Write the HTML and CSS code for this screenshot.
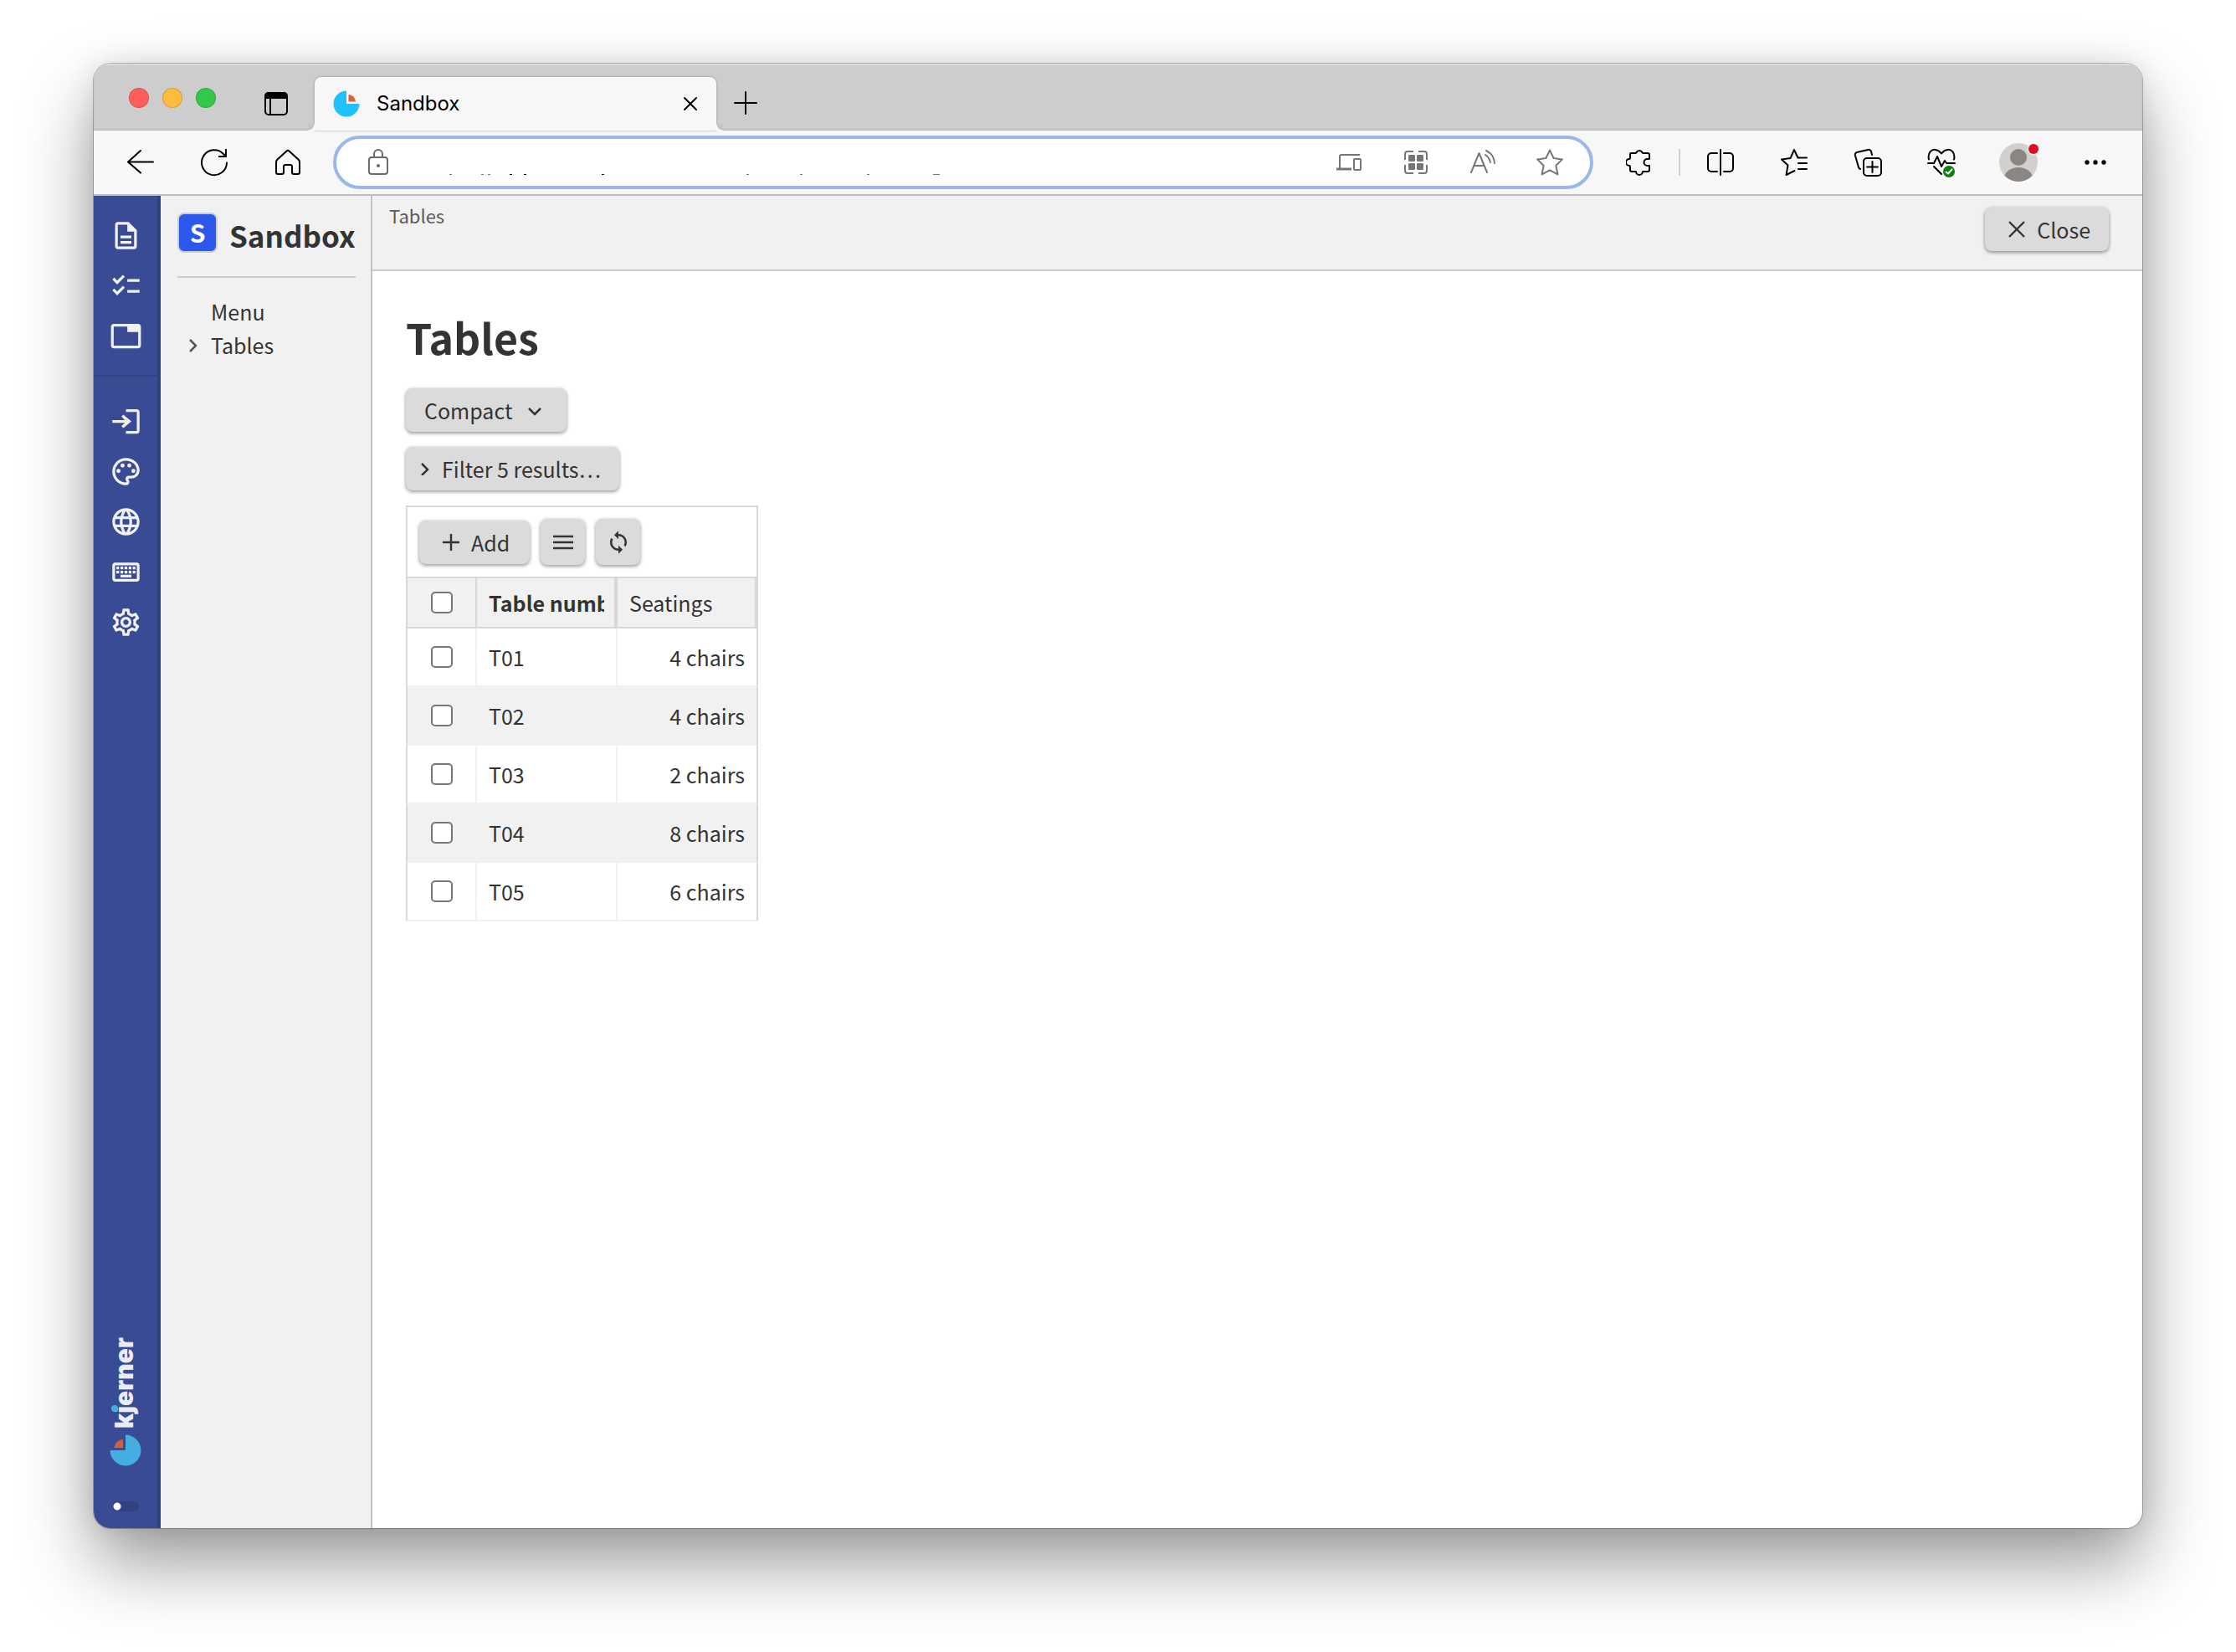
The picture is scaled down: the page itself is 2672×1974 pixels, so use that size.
FILE: index.html
```html
<!DOCTYPE html>
<html lang="en">
<head>
<meta charset="utf-8">
<title>Sandbox</title>
<link rel="stylesheet" href="styles.css">
</head>
<body>
<div class="window">
  <div class="tabstrip">
    <div class="lights"><i class="light red"></i><i class="light amber"></i><i class="light green"></i></div>
    <button class="icon-button tab-actions" aria-label="Tab actions">
      <svg width="28" height="28" viewBox="0 0 28 28" fill="none" stroke="#000" stroke-width="2"><rect x="1" y="1" width="26" height="26" rx="4"/><path d="M7 8v19"/><path d="M0 8V5a5 5 0 0 1 5-5h18a5 5 0 0 1 5 5v3z" fill="#000" stroke="none"/></svg>
    </button>
    <div class="tab">
      <svg width="32" height="32" viewBox="0 0 32 32"><path d="M16 0.500A15.500 15.500 0 1 0 31.500 16H16z" fill="#22bfff"/><path d="M18.500 5a9 9 0 0 1 8.500 8.500h-8.500z" fill="#d9643a"/></svg>
      <span class="tab-title">Sandbox</span>
      <button class="icon-button" aria-label="Close tab"><svg width="18" height="18" viewBox="0 0 18 18" stroke="#000" stroke-width="2" stroke-linecap="round"><path d="M2 2l14 14M16 2L2 16"/></svg></button>
    </div>
    <button class="icon-button new-tab" aria-label="New tab"><svg width="28" height="28" viewBox="0 0 28 28" stroke="#000" stroke-width="2" stroke-linecap="round"><path d="M14 1v26M1 14h26"/></svg></button>
  </div>

  <div class="toolbar">
    <button class="icon-button slot" aria-label="Back"><svg width="32" height="32" viewBox="0 0 32 32" fill="none" stroke="#000" stroke-width="2" stroke-linecap="round" stroke-linejoin="round"><path d="M16 2L1 15.500l15 13M1 15.500h30"/></svg></button>
    <button class="icon-button slot" aria-label="Refresh"><svg width="34" height="34" viewBox="0 0 34 34" fill="none" stroke="#000" stroke-width="2" stroke-linejoin="round"><path d="M32 17.500a15 15 0 1 1-4-10.500l3 3" stroke-linecap="round"/><path d="M31 1v9h-9"/></svg></button>
    <button class="icon-button slot" aria-label="Home"><svg width="30" height="32" viewBox="0 0 30 32" fill="none" stroke="#000" stroke-width="2" stroke-linejoin="round"><path d="M13.500 2.500a2 2 0 0 1 3 0l11 10q1.500 1.500 1.500 3V28a2 2 0 0 1-2 2h-5a2 2 0 0 1-2-2v-7a2 2 0 0 0-2-2h-6a2 2 0 0 0-2 2v7a2 2 0 0 1-2 2H3a2 2 0 0 1-2-2V15.500q0-1.500 1.500-3z"/></svg></button>
    <div class="address">
      <svg width="24" height="32" viewBox="0 0 24 32" fill="none" stroke="#6b6b6b" stroke-width="2"><rect x="1" y="10" width="22" height="20" rx="3"/><path d="M7 10V6a5 5 0 0 1 10 0v4"/><circle cx="12" cy="20" r="2" fill="#6b6b6b" stroke="none"/></svg>
      <div class="address-field">
        <input class="address-input" type="text" aria-label="Address">
        <svg class="address-marks" width="680" height="32" viewBox="0 0 680 32" fill="#777"><path d="M73 30h3v1h-3zM111 30h3v1h-3zM119 30h3v1h-3zM428 30h3v1h-3zM492 30h3v1h-3zM572 30h3v1h-3zM651 30h8v1h-8z"/><path d="M145 30h3v1h-3zM162 30h3v1h-3zM255 30h3v1h-3z" fill="#000"/></svg>
      </div>
      <button class="icon-button slot-sm" aria-label="Send to device"><svg width="30" height="32" viewBox="0 0 30 32" fill="none" stroke="#767676" stroke-width="2"><path d="M28 7H6a2 2 0 0 0-2 2v15"/><path d="M0 24h18" stroke-width="3"/><rect x="21" y="12" width="8" height="13" rx="1"/></svg></button>
      <button class="icon-button slot-sm" aria-label="QR code"><svg width="28" height="28" viewBox="0 0 28 28" fill="#767676" stroke="#767676" stroke-width="2"><path fill="none" d="M11 1H4a3 3 0 0 0-3 3v7M17 1h7a3 3 0 0 1 3 3v7M11 27H4a3 3 0 0 1-3-3v-7M17 27h7a3 3 0 0 0 3-3v-7"/><g stroke="none"><rect x="5" y="5" width="8" height="8" rx="1"/><rect x="15" y="5" width="8" height="8" rx="1"/><rect x="5" y="15" width="8" height="8" rx="1"/><rect x="15" y="15" width="8" height="8" rx="1"/></g></svg></button>
      <button class="icon-button slot-sm" aria-label="Read aloud"><svg width="30" height="32" viewBox="0 0 30 32" fill="none" stroke="#767676" stroke-width="2" stroke-linecap="round" stroke-linejoin="round"><path d="M1 28L10.500 5 20 28M4.500 20h12M18 7a14 14 0 0 1 6 9M19 2a18 18 0 0 1 10 15"/></svg></button>
      <button class="icon-button slot-sm" aria-label="Add to favourites"><svg width="34" height="34" viewBox="0 0 34 34" fill="none" stroke="#767676" stroke-width="2" stroke-linejoin="round"><path d="M17 2.500l4.600 9.600 10.400 1.300-7.600 7.300 2 10.600L17 26.300l-9.400 5 2-10.600L2 13.400l10.400-1.300z"/></svg></button>
    </div>
    <div class="actions">
      <button class="icon-button slot-lg" aria-label="Extensions"><svg width="30" height="34" viewBox="0 0 30 34" fill="none" stroke="#000" stroke-width="2" stroke-linejoin="round"><path d="M6 6h5.500a1 1 0 0 0 1-1 4 4 0 0 1 7 0 1 1 0 0 0 1 1H26a2 2 0 0 1 2 2v5h-2.500a4 4 0 0 0 0 8H28v5a2 2 0 0 1-2 2h-6a4 4 0 0 1-8 0H7a2 2 0 0 1-2-2v-4a1 1 0 0 0-1-1 4 4 0 0 1 0-8 1 1 0 0 0 1-1V7a1 1 0 0 1 1-1z"/></svg></button>
      <span class="divider"></span>
      <button class="icon-button slot-lg" aria-label="Split screen"><svg width="32" height="34" viewBox="0 0 32 34" fill="none" stroke="#000" stroke-width="2" stroke-linecap="round"><path d="M12 6H5a4 4 0 0 0-4 4v14a4 4 0 0 0 4 4h7M20 6h7a4 4 0 0 1 4 4v14a4 4 0 0 1-4 4h-7M16 2v30"/></svg></button>
      <button class="icon-button slot-lg" aria-label="Favourites"><svg width="34" height="34" viewBox="0 0 34 34" fill="none" stroke="#000" stroke-width="2" stroke-linecap="round" stroke-linejoin="round"><path d="M32 11.500H21.500L17 2l-4.500 10L2 13.500l7.500 7L7.500 32l10-5M22 18h10M22 25h10"/></svg></button>
      <button class="icon-button slot-lg" aria-label="Collections"><svg width="34" height="34" viewBox="0 0 34 34" fill="none" stroke="#000" stroke-width="2" stroke-linecap="round"><rect x="12" y="12" width="21" height="21" rx="4"/><path d="M22.500 16v13M16 22.500h13M22 8l-1-4a3 3 0 0 0-4-2L4 5a3 3 0 0 0-2 4l4 14a3 3 0 0 0 2 2"/></svg></button>
      <button class="icon-button slot-lg" aria-label="Browser essentials"><svg width="34" height="36" viewBox="0 0 34 36" fill="none" stroke="#000" stroke-width="2" stroke-linecap="round" stroke-linejoin="round"><path d="M2 14.500C0 6 6 2 10 3q4 .5 7 4.500Q20 3.500 24 3c4-1 10 3 8 11.500M1 19h7l4-8 5 12 4-7 2 3h10M8 23l9 9"/><circle cx="26" cy="29" r="7" fill="#107c10" stroke="none"/><path d="M22.500 29.500l2.500 2 4.500-5" stroke="#fff"/></svg></button>
      <button class="icon-button slot-xl" aria-label="Profile"><svg width="48" height="48" viewBox="0 0 48 48"><defs><clipPath id="face"><circle cx="24" cy="24" r="23"/></clipPath></defs><circle cx="24" cy="24" r="23" fill="#d2d0cd"/><g clip-path="url(#face)" fill="#8a8684"><circle cx="24" cy="18" r="10"/><ellipse cx="24" cy="43" rx="17" ry="13"/></g><circle cx="42" cy="8" r="7.500" fill="#f7f7f7"/><circle cx="42" cy="8" r="6" fill="#e00b1c"/></svg></button>
      <button class="icon-button slot-lg" aria-label="Settings and more"><svg width="28" height="8" viewBox="0 0 28 8"><circle cx="4" cy="4" r="2.700"/><circle cx="14" cy="4" r="2.700"/><circle cx="24" cy="4" r="2.700"/></svg></button>
    </div>
  </div>

  <div class="app">
    <nav class="rail" aria-label="Tools">
      <div class="rail-group">
        <button class="icon-button rail-item" aria-label="Documents"><svg class="mi" viewBox="0 0 24 24"><path d="M8 16h8v2H8zm0-4h8v2H8zm6-10H6c-1.100 0-2 .9-2 2v16c0 1.100.89 2 1.990 2H18c1.100 0 2-.9 2-2V8l-6-6zm4 18H6V4h7v5h5v11z"/></svg></button>
        <button class="icon-button rail-item" aria-label="Tasks"><svg class="mi" viewBox="0 0 24 24"><path d="M22 7h-9v2h9V7zm0 8h-9v2h9v-2zM5.540 11L2 7.460l1.410-1.410 2.120 2.120 4.240-4.240 1.410 1.410L5.540 11zm0 8L2 15.460l1.410-1.410 2.120 2.120 4.240-4.240 1.410 1.410L5.540 19z"/></svg></button>
        <button class="icon-button rail-item" aria-label="Tabs"><svg class="mi" viewBox="0 0 24 24"><path d="M21 3H3c-1.100 0-2 .9-2 2v14c0 1.100.9 2 2 2h18c1.100 0 2-.9 2-2V5c0-1.100-.9-2-2-2zm0 16H3V5h10v4h8v10z"/></svg></button>
      </div>
      <div class="rail-group rail-group-second">
        <button class="icon-button rail-item" aria-label="Sign in"><svg class="mi" viewBox="0 0 24 24"><path d="M2 11h9.200L8.700 8.500 10.100 7.100 16 12l-5.900 4.900-1.400-1.400L11.200 13H2z"/><path d="M12 3h8c1.100 0 2 .9 2 2v14c0 1.100-.9 2-2 2h-8v-2h8V5h-8z"/></svg></button>
        <button class="icon-button rail-item" aria-label="Theme"><svg class="mi" viewBox="0 0 24 24"><path d="M12 22C6.490 22 2 17.510 2 12S6.490 2 12 2s10 4.040 10 9c0 3.310-2.690 6-6 6h-1.770c-.28 0-.5.22-.5.5 0 .12.050.23.130.33.410.47.640 1.060.640 1.670A2.500 2.500 0 0 1 12 22zm0-18c-4.410 0-8 3.590-8 8s3.590 8 8 8c.28 0 .5-.22.5-.5a.54.54 0 0 0-.14-.35c-.41-.46-.63-1.050-.63-1.650a2.500 2.500 0 0 1 2.500-2.500H16c2.210 0 4-1.790 4-4 0-3.860-3.590-7-8-7z"/><circle cx="6.500" cy="11.500" r="1.500"/><circle cx="9.500" cy="7.500" r="1.500"/><circle cx="14.500" cy="7.500" r="1.500"/><circle cx="17.500" cy="11.500" r="1.500"/></svg></button>
        <button class="icon-button rail-item" aria-label="Language"><svg class="mi" viewBox="0 0 24 24"><path d="M11.990 2C6.470 2 2 6.480 2 12s4.470 10 9.990 10C17.520 22 22 17.520 22 12S17.520 2 11.990 2zm6.930 6h-2.950c-.32-1.250-.78-2.450-1.380-3.560 1.840.63 3.370 1.910 4.330 3.560zM12 4.040c.83 1.200 1.480 2.530 1.910 3.960h-3.820c.43-1.430 1.080-2.760 1.910-3.960zM4.260 14C4.100 13.360 4 12.690 4 12s.1-1.360.26-2h3.380c-.08.66-.14 1.320-.14 2s.06 1.340.14 2H4.260zm.82 2h2.950c.32 1.250.78 2.450 1.380 3.560-1.840-.63-3.370-1.900-4.330-3.560zm2.950-8H5.080c.96-1.660 2.490-2.930 4.330-3.560C8.810 5.550 8.350 6.750 8.030 8zM12 19.960c-.83-1.200-1.480-2.530-1.910-3.960h3.820c-.43 1.430-1.080 2.760-1.910 3.960zM14.340 14H9.660c-.09-.66-.16-1.320-.16-2s.07-1.350.16-2h4.680c.09.65.16 1.320.16 2s-.07 1.340-.16 2zm.25 5.560c.6-1.110 1.060-2.310 1.380-3.560h2.950c-.96 1.650-2.490 2.930-4.330 3.560zM16.360 14c.08-.66.14-1.320.14-2s-.06-1.340-.14-2h3.380c.16.64.26 1.310.26 2s-.1 1.360-.26 2h-3.380z"/></svg></button>
        <button class="icon-button rail-item" aria-label="Keyboard shortcuts"><svg class="mi" viewBox="0 0 24 24"><path d="M20 5H4c-1.100 0-2 .9-2 2v10c0 1.100.9 2 2 2h16c1.100 0 2-.9 2-2V7c0-1.100-.9-2-2-2zm0 12H4V7h16z"/><path d="M5 8h2v2H5zm3 0h2v2H8zm3 0h2v2h-2zm3 0h2v2h-2zm3 0h2v2h-2zM5 11h2v2H5zm3 0h2v2H8zm3 0h2v2h-2zm3 0h2v2h-2zm3 0h2v2h-2zM8 14h8v2H8z"/></svg></button>
        <button class="icon-button rail-item" aria-label="Settings"><svg class="mi" viewBox="0 0 24 24"><path d="M19.430 12.980c.04-.32.070-.64.070-.98s-.03-.66-.07-.98l2.110-1.650c.19-.15.240-.42.120-.64l-2-3.460c-.09-.16-.26-.25-.44-.25-.06 0-.12.010-.17.030l-2.490 1c-.52-.4-1.080-.73-1.690-.98l-.38-2.650C14.460 2.180 14.250 2 14 2h-4c-.25 0-.46.180-.49.420l-.38 2.650c-.61.25-1.170.59-1.690.98l-2.490-1c-.06-.02-.12-.03-.18-.03-.17 0-.34.090-.43.250l-2 3.460c-.13.220-.07.490.12.640l2.110 1.650c-.04.320-.07.650-.07.980s.03.660.07.980l-2.110 1.650c-.19.150-.24.420-.12.640l2 3.460c.09.160.26.250.44.250.06 0 .12-.01.17-.03l2.490-1c.52.400 1.080.73 1.690.98l.38 2.650c.03.240.24.420.49.420h4c.25 0 .46-.18.490-.42l.38-2.650c.61-.25 1.170-.59 1.690-.98l2.490 1c.06.020.12.030.18.030.17 0 .34-.09.430-.25l2-3.460c.12-.22.070-.49-.12-.64l-2.110-1.650zm-1.980-1.710c.04.310.05.520.05.730 0 .21-.02.430-.05.730l-.14 1.130.89.700 1.080.84-.7 1.210-1.270-.51-1.040-.42-.9.680c-.43.320-.84.560-1.250.73l-1.060.43-.16 1.130-.2 1.350h-1.400l-.19-1.350-.16-1.130-1.060-.43c-.43-.18-.83-.41-1.230-.71l-.91-.7-1.060.43-1.270.51-.7-1.210 1.080-.84.89-.7-.14-1.130c-.03-.31-.05-.54-.05-.74s.02-.43.050-.73l.14-1.130-.89-.7-1.080-.84.7-1.210 1.270.51 1.040.42.900-.68c.43-.32.840-.56 1.250-.73l1.060-.43.160-1.130.2-1.350h1.390l.19 1.350.16 1.130 1.060.43c.43.180.83.410 1.230.71l.91.700 1.060-.43 1.270-.51.700 1.210-1.070.85-.89.700.14 1.130zM12 8c-2.210 0-4 1.790-4 4s1.790 4 4 4 4-1.790 4-4-1.790-4-4-4zm0 6c-1.100 0-2-.9-2-2s.9-2 2-2 2 .9 2 2-.9 2-2 2z"/></svg></button>
      </div>
      <svg class="brand" width="44" height="158" viewBox="0 0 44 158" role="img" aria-label="kjerner">
        <text class="brand-text" transform="rotate(-90)" x="-111" y="31">kjerner</text>
        <circle cx="9" cy="87" r="4" fill="#46ade1"/>
        <path d="M22 118.500A18.500 18.500 0 1 1 3.500 137H22z" fill="#46ade1"/>
        <path d="M19 124v10H8.500A10.500 10.500 0 0 1 19 124z" fill="#cb643c"/>
      </svg>
      <input class="switch" type="checkbox" aria-label="Dark mode">
    </nav>

    <aside class="sidebar">
      <div class="brandline"><span class="badge">S</span><span class="app-name">Sandbox</span></div>
      <ul class="menu">
        <li><a href="#menu">Menu</a></li>
        <li><svg width="20" height="20" viewBox="0 0 20 20" fill="none" stroke="#555" stroke-width="2.500"><path d="M5 4l7 7-7 7"/></svg><a href="#tables">Tables</a></li>
      </ul>
    </aside>

    <main class="main">
      <header class="header">
        <a class="crumb" href="#tables">Tables</a>
        <button class="button"><svg width="20" height="20" viewBox="0 0 20 20" stroke="#333" stroke-width="2.400"><path d="M1 1l18 18M19 1L1 19"/></svg>Close</button>
      </header>
      <section class="content">
        <h1 class="title">Tables</h1>
        <div class="select-wrap">
          <select class="button select" aria-label="View"><option>Compact</option></select>
          <svg class="select-arrow" width="16" height="16" viewBox="0 0 16 16" fill="none" stroke="#333" stroke-width="2.500"><path d="M1 6l7 7 7-7"/></svg>
        </div>
        <button class="button filter"><svg width="12" height="16" viewBox="0 0 12 16" fill="none" stroke="#333" stroke-width="2.500"><path d="M2 2l7 7-7 7"/></svg>Filter 5 results…</button>

        <div class="grid">
          <div class="grid-tools">
            <button class="button add"><svg width="20" height="20" viewBox="0 0 20 20" stroke="#333" stroke-width="2.400"><path d="M10 0v20M0 10h20"/></svg>Add</button>
            <button class="button square" aria-label="Menu"><svg width="24" height="18" viewBox="0 0 24 18" stroke="#333" stroke-width="2.400"><path d="M0 2h24M0 9h24M0 16h24"/></svg></button>
            <button class="button square" aria-label="Reload"><svg width="30" height="30" viewBox="0 0 24 24" fill="#333"><path d="M12 4V1L8 5l4 4V6c3.310 0 6 2.690 6 6 0 1.010-.25 1.970-.7 2.800l1.460 1.460C19.540 15.030 20 13.570 20 12c0-4.420-3.580-8-8-8zm0 14c-3.310 0-6-2.690-6-6 0-1.010.25-1.970.7-2.800L5.240 7.740C4.460 8.970 4 10.430 4 12c0 4.420 3.580 8 8 8v3l4-4-4-4v3z"/></svg></button>
          </div>
          <table class="table">
            <colgroup><col class="col-check"><col class="col-data"><col class="col-data"></colgroup>
            <thead><tr><th><input class="check" type="checkbox" aria-label="Select all"></th><th class="sorted"><div class="clip">Table number</div></th><th>Seatings</th></tr></thead>
            <tbody>
              <tr><td><input class="check" type="checkbox" aria-label="Select T01"></td><td>T01</td><td>4 chairs</td></tr>
              <tr><td><input class="check" type="checkbox" aria-label="Select T02"></td><td>T02</td><td>4 chairs</td></tr>
              <tr><td><input class="check" type="checkbox" aria-label="Select T03"></td><td>T03</td><td>2 chairs</td></tr>
              <tr><td><input class="check" type="checkbox" aria-label="Select T04"></td><td>T04</td><td>8 chairs</td></tr>
              <tr><td><input class="check" type="checkbox" aria-label="Select T05"></td><td>T05</td><td>6 chairs</td></tr>
            </tbody>
          </table>
        </div>
      </section>
    </main>
  </div>
</div>
</body>
</html>
```
FILE: styles.css
```css
* { box-sizing: border-box; }

body {
  margin: 0;
  min-height: 100vh;
  padding: 76px 112px 148px;
  display: flex;
  background: #fff;
  color: #333;
  font: 25px/40px "Noto Sans CJK JP", "Noto Sans", sans-serif;
}

button, input, select { font: inherit; color: inherit; margin: 0; }
a { color: inherit; text-decoration: none; }
svg { display: block; flex: none; }

.window {
  flex: 1;
  display: flex;
  flex-direction: column;
  min-width: 0;
  border-radius: 20px;
  overflow: hidden;
  background: #fff;
  box-shadow: 0 0 0 1px rgba(0, 0, 0, .25), 0 42px 86px rgba(0, 0, 0, .4), 0 0 32px rgba(0, 0, 0, .1);
}

.icon-button {
  display: flex;
  align-items: center;
  justify-content: center;
  padding: 0;
  border: 0;
  background: none;
}

/* Browser tab strip */
.tabstrip {
  display: flex;
  height: 80px;
  background: #cdcdcd;
  box-shadow: inset 0 2px #dcdcdc, inset 0 -2px 2px #bdbdbd;
}
.lights { display: flex; gap: 16px; padding: 29px 0 0 42px; }
.light { width: 24px; height: 24px; border-radius: 50%; border: 1px solid rgba(0, 0, 0, .15); }
.red { background: #fe5f5c; }
.amber { background: #fdbb40; }
.green { background: #34c84a; }
.tab-actions { width: 28px; margin: 16px 32px 0 58px; }
.tab {
  position: relative;
  display: flex;
  align-items: center;
  gap: 20px;
  width: 480px;
  margin-top: 16px;
  padding: 0 22px;
  border-radius: 8px 8px 0 0;
  background: #f7f7f7;
  box-shadow: 0 0 3px rgba(0, 0, 0, .3);
}
/* Flared feet of the active tab */
.tab::before, .tab::after {
  content: "";
  position: absolute;
  bottom: 0;
  width: 8px;
  height: 8px;
}
.tab::before { right: 100%; background: radial-gradient(circle at 0 0, #c4c4c4 7px, #f7f7f7 8px); }
.tab::after { left: 100%; background: radial-gradient(circle at 8px 0, #c4c4c4 7px, #f7f7f7 8px); }
.tab-title { flex: 1; color: #000; font: 24px/32px Inter, sans-serif; }
.new-tab { width: 70px; margin-top: 14px; }

/* Browser toolbar */
.toolbar {
  display: flex;
  align-items: center;
  height: 78px;
  padding: 0 12px;
  border-bottom: 2px solid #bdbdbd;
  background: #f7f7f7;
}
.slot { width: 88px; }
.slot-sm { width: 80px; }
.slot-lg { width: 88px; }
.slot-xl { width: 96px; }
.address {
  display: flex;
  flex: 1;
  align-items: center;
  height: 64px;
  margin-left: 10px;
  padding: 0 8px 0 38px;
  border: 4px solid #9ab7ea;
  border-radius: 32px;
  background: #fff;
}
.address-field { display: grid; flex: 1; align-items: center; min-width: 0; }
.address-field > * { grid-area: 1 / 1; }
.address-input { min-width: 0; border: 0; outline: 0; background: none; }
.address-marks { pointer-events: none; }
.actions { display: flex; align-items: center; margin-left: 10px; }
.divider { width: 2px; height: 32px; margin: 0 4px; background: #cfcfcf; }

/* Application */
.app { display: flex; flex: 1; }

.rail {
  display: flex;
  flex-direction: column;
  align-items: center;
  width: 80px;
  padding-bottom: 20px;
  border-right: 4px solid #324080;
  background: #394b95;
}
.rail-group { width: 100%; padding: 17px 0; }
.rail-group-second { padding-top: 23px; border-top: 2px solid #324080; }
.rail-item { width: 100%; height: 60px; }
.mi { width: 39px; height: 39px; fill: #f1f1f1; }
.brand { margin-top: auto; margin-bottom: 40px; }
.brand-text { fill: #e9ecf5; font: 900 30px Inter, sans-serif; }
.switch {
  appearance: none;
  width: 32px;
  height: 12px;
  border-radius: 6px;
  background: radial-gradient(circle at 6px 6px, #fff 4px, transparent 5px) #324080;
}

.sidebar {
  width: 253px;
  padding: 20px 18px 20px 20px;
  border-right: 2px solid #c2c2c2;
  background: #f1f1f1;
}
.brandline {
  display: flex;
  gap: 14px;
  height: 78px;
  border-bottom: 2px solid #ccc;
}
.badge {
  flex: none;
  width: 48px;
  height: 48px;
  border: 2px solid #ccc;
  border-radius: 8px;
  background: #2c59eb;
  color: #fff;
  text-align: center;
  font-weight: 700;
  font-size: 30px;
  line-height: 42px;
}
.app-name { font-size: 35px; font-weight: 700; line-height: 54px; }
.menu { margin: 20px 0 0; padding: 0; list-style: none; }
.menu li { display: flex; align-items: center; justify-content: flex-end; gap: 10px; }
.menu a { width: 173px; }

.main { flex: 1; min-width: 0; }
.header {
  display: flex;
  justify-content: space-between;
  height: 90px;
  padding: 8px 40px 0 20px;
  border-bottom: 2px solid #ccc;
  background: #f1f1f1;
}
.crumb { font-size: 22px; line-height: 30px; color: #5a5a5a; }

.button {
  display: flex;
  align-items: center;
  gap: 14px;
  height: 52px;
  padding: 0 22px;
  border: 0;
  border-radius: 8px;
  background: #dbdbdb;
  box-shadow: 0 2px 4px rgba(0, 0, 0, .35), 0 0 4px rgba(0, 0, 0, .12);
  color: #333;
  line-height: 40px;
}
.header .button { margin-top: 6px; padding-left: 28px; }

.content {
  display: flex;
  flex-direction: column;
  align-items: flex-start;
  gap: 18px;
  padding: 40px;
}
.title { margin: 0 0 6px; font-size: 50px; font-weight: 700; line-height: 76px; }
.select-wrap { display: grid; align-items: center; }
.select-wrap > * { grid-area: 1 / 1; }
.select { width: 192px; appearance: none; }
.select-arrow { justify-self: end; margin-right: 30px; pointer-events: none; }
.filter { padding-left: 17px; }

.grid { width: 421px; }
.grid-tools {
  display: flex;
  align-items: center;
  gap: 13px;
  height: 85px;
  padding: 0 14px;
  border: 2px solid #d8d8d8;
  border-bottom: 0;
}
.add { padding: 0 24px 0 28px; }
.square { justify-content: center; width: 53px; height: 55px; padding: 0; }

.table { width: 100%; table-layout: fixed; border-spacing: 0; }
.col-check { width: 85px; }
.col-data { width: 168px; }
.table th, .table td { padding: 0 14px; text-align: left; font-weight: 400; }
.table th {
  height: 62px;
  border: solid #d8d8d8;
  border-width: 2px 4px 2px 0;
  background: #f1f1f1;
}
.table th:first-child { border-width: 2px; }
.table td { height: 70px; border-right: 2px solid #f1f1f1; border-bottom: 2px solid #f1f1f1; }
.table td:first-child { border-left: 2px solid #d8d8d8; }
.table td:last-child { border-right-color: #d8d8d8; text-align: right; }
.table tr > :first-child { text-align: center; }
.table tbody tr:nth-child(even) { background: #f1f1f1; }
.table .sorted { padding-right: 12px; font-weight: 700; }
.clip { overflow: hidden; white-space: nowrap; }
.check {
  appearance: none;
  display: block;
  width: 26px;
  height: 26px;
  margin: 0 auto;
  border: 2px solid #767676;
  border-radius: 5px;
  background: #fff;
}
```
